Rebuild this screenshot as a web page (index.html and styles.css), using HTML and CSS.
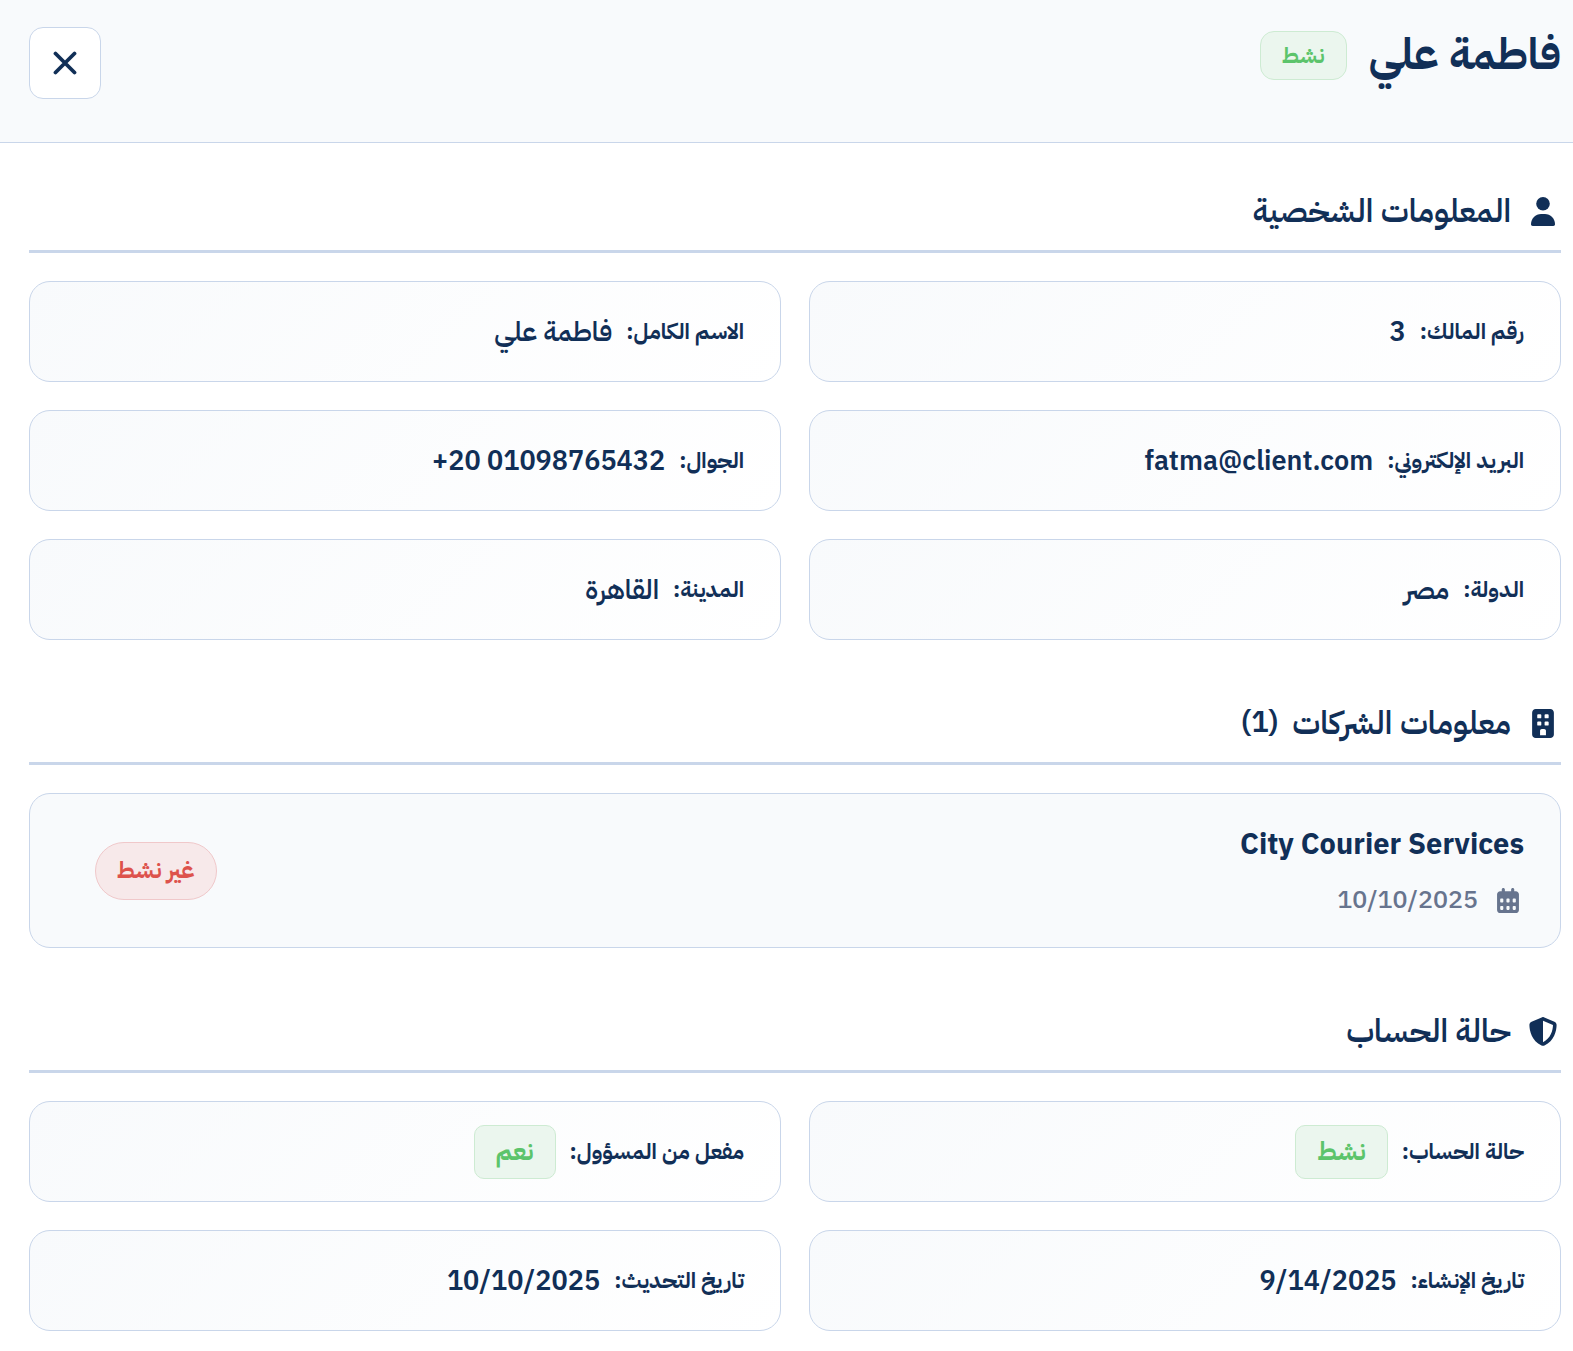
FILE: index.html
```html
<!doctype html>
<html lang="ar" dir="rtl">
    <head>
        <meta charset="utf-8">
        <meta name="viewport" content="width=device-width, initial-scale=1">
        <title>فاطمة علي</title>
        <link rel="stylesheet" href="styles.css">
    </head>
<body>

    <header class="header">
        <div class="header-title">
            <h1>فاطمة علي</h1>
            <span class="badge badge-small">نشط</span>
        </div>
        <button type="button" class="close" aria-label="إغلاق">
            <svg viewBox="0 0 24 24"><path d="M2.5 2.5l19 19M21.5 2.5l-19 19" fill="none" stroke="currentColor" stroke-width="3.8" stroke-linecap="round"/></svg>
        </button>
    </header>

    <main class="content">
        <!-- المعلومات الشخصية -->
        <section>
            <h2 class="section-title">
                <svg class="icon" viewBox="0 0 448 512"><circle cx="224" cy="120" r="120"/><path d="M12 482C12 384 92 302 190 302h68c98 0 178 82 178 180 0 17-13 30-30 30H42c-17 0-30-13-30-30z"/></svg>
                <span>المعلومات الشخصية</span>
            </h2>
            <dl class="grid">
                <div class="item"><dt>رقم المالك:</dt><dd>3</dd></div>
                <div class="item"><dt>الاسم الكامل:</dt><dd>فاطمة علي</dd></div>
                <div class="item"><dt>البريد الإلكتروني:</dt><dd dir="ltr">fatma@client.com</dd></div>
                <div class="item"><dt>الجوال:</dt><dd dir="ltr">+20 01098765432</dd></div>
                <div class="item"><dt>الدولة:</dt><dd>مصر</dd></div>
                <div class="item"><dt>المدينة:</dt><dd>القاهرة</dd></div>
            </dl>
        </section>

        <!-- معلومات الشركات -->
        <section>
            <h2 class="section-title">
                <svg class="icon" viewBox="0 0 384 512"><path fill-rule="evenodd" d="M64 0h256c35 0 64 29 64 64v384c0 35-29 64-64 64H64c-35 0-64-29-64-64V64C0 29 29 0 64 0zM106 92c-9 0-16 7-16 16v40c0 9 7 16 16 16h40c9 0 16-7 16-16v-40c0-9-7-16-16-16zM236 92c-9 0-16 7-16 16v40c0 9 7 16 16 16h40c9 0 16-7 16-16v-40c0-9-7-16-16-16zM106 220c-9 0-16 7-16 16v40c0 9 7 16 16 16h40c9 0 16-7 16-16v-40c0-9-7-16-16-16zM236 220c-9 0-16 7-16 16v40c0 9 7 16 16 16h40c9 0 16-7 16-16v-40c0-9-7-16-16-16zM172 352c-18 0-32 14-32 32v78h104v-78c0-18-14-32-32-32z"/></svg>
                <span>معلومات الشركات</span>
                <span class="count">(1)</span>
            </h2>
            <article class="company">
                <div class="company-info">
                    <h3 dir="ltr">City Courier Services</h3>
                    <p>
                        <svg class="icon" viewBox="0 0 448 512"><path fill-rule="evenodd" d="M128 0c18 0 32 14 32 32v32h128V32c0-18 14-32 32-32s32 14 32 32v32h32c35 0 64 29 64 64v320c0 35-29 64-64 64H64c-35 0-64-29-64-64V128c0-35 29-64 64-64h32V32c0-18 14-32 32-32zM64 232v48c0 9 7 16 16 16h32c9 0 16-7 16-16v-48c0-9-7-16-16-16H80c-9 0-16 7-16 16zM192 232v48c0 9 7 16 16 16h32c9 0 16-7 16-16v-48c0-9-7-16-16-16h-32c-9 0-16 7-16 16zM320 232v48c0 9 7 16 16 16h32c9 0 16-7 16-16v-48c0-9-7-16-16-16h-32c-9 0-16 7-16 16zM64 384v48c0 9 7 16 16 16h32c9 0 16-7 16-16v-48c0-9-7-16-16-16H80c-9 0-16 7-16 16zM192 384v48c0 9 7 16 16 16h32c9 0 16-7 16-16v-48c0-9-7-16-16-16h-32c-9 0-16 7-16 16zM320 384v48c0 9 7 16 16 16h32c9 0 16-7 16-16v-48c0-9-7-16-16-16h-32c-9 0-16 7-16 16z"/></svg>
                        <span>10/10/2025</span>
                    </p>
                </div>
                <span class="badge badge-danger">غير نشط</span>
            </article>
        </section>

        <!-- حالة الحساب -->
        <section>
            <h2 class="section-title">
                <svg class="icon" viewBox="0 0 512 512"><path d="M256 0c4.6 0 9.2 1 13.4 2.9L457.7 82.8c22 9.3 38.4 31 38.3 57.2c-.5 99.2-41.3 280.7-213.6 363.2c-16.7 8-36.1 8-52.8 0C57.3 420.7 16.5 239.2 16 140c-.1-26.2 16.3-47.9 38.3-57.2L242.7 2.9C246.8 1 251.4 0 256 0zm0 66.8V444.8C394 378 431.1 230.1 432 141.4L256 66.8z"/></svg>
                <span>حالة الحساب</span>
            </h2>
            <dl class="grid">
                <div class="item"><dt>حالة الحساب:</dt><dd class="badge">نشط</dd></div>
                <div class="item"><dt>مفعل من المسؤول:</dt><dd class="badge">نعم</dd></div>
                <div class="item"><dt>تاريخ الإنشاء:</dt><dd>9/14/2025</dd></div>
                <div class="item"><dt>تاريخ التحديث:</dt><dd>10/10/2025</dd></div>
            </dl>
        </section>
    </main>

</body>
</html>
```
FILE: styles.css
```css
* {
    margin: 0;
    padding: 0;
    box-sizing: border-box;
}

body {
    background-color: #fff;
    color: #112f57;
    font-family: "IBM Plex Sans Arabic", "Noto Sans", "Noto Sans Arabic", "DejaVu Sans", sans-serif;
    font-weight: 600;
}

.header {
    display: flex;
    justify-content: space-between;
    align-items: flex-start;
    padding: 27px 12px 43px 29px;
    background-color: #f8fafc;
    border-bottom: 1px solid #c9d6ea;
}

.header-title {
    display: flex;
    align-items: center;
    gap: 22px;
}

h1 {
    font-size: 43px;
    line-height: 56px;
    font-weight: 700;
}

.close {
    display: flex;
    align-items: center;
    justify-content: center;
    width: 72px;
    height: 72px;
    border: 1px solid #c9d6ea;
    border-radius: 14px;
    background-color: #fff;
    color: #112f57;
    cursor: pointer;
}

.close svg {
    width: 24px;
    height: 24px;
}

.content {
    display: flex;
    flex-direction: column;
    gap: 44px;
    padding: 29px 12px 20px 29px;
}

.section-title {
    display: flex;
    align-items: center;
    gap: 14px;
    margin-bottom: 28px;
    padding: 14px 0;
    border-bottom: 3px solid #c9d6ea;
    font-size: 32px;
    line-height: 50px;
    font-weight: 600;
}

.count {
    font-size: 29px;
}

.icon {
    width: 36px;
    height: 29px;
    fill: currentColor;
}

.grid {
    display: grid;
    grid-template-columns: 1fr 1fr;
    gap: 28px;
}

.item {
    display: flex;
    align-items: center;
    gap: 14px;
    min-height: 101px;
    padding: 22px 36px;
    border: 1px solid #c9d6ea;
    border-radius: 21px;
    background: linear-gradient(135deg, #f8fafc 0%, #fff 100%);
}

.item dt {
    font-size: 22px;
    line-height: 32px;
    font-weight: 700;
}

.item dd {
    font-size: 27px;
    line-height: 40px;
}

.badge,
.item .badge {
    padding: 5px 21px;
    border: 1px solid #cdebd2;
    border-radius: 10px;
    background-color: #ebf6ee;
    color: #5cc46b;
    font-size: 25px;
    line-height: 42px;
    font-weight: 700;
}

.badge-small {
    padding: 5px 21px;
    border-radius: 14px;
    font-size: 22px;
    line-height: 37px;
}

.company {
    display: flex;
    align-items: center;
    justify-content: space-between;
    padding: 28px 36px 27px 65px;
    border: 1px solid #c9d6ea;
    border-radius: 21px;
    background-color: #f8fafc;
}

.company h3 {
    font-size: 29px;
    line-height: 46px;
    font-weight: 700;
}

.company p {
    display: flex;
    align-items: center;
    gap: 14px;
    margin-top: 12px;
    color: #67748e;
    font-size: 25px;
    line-height: 40px;
    font-weight: 500;
}

.company .icon {
    width: 32px;
    height: 25px;
}

.badge-danger {
    border-color: #f0c8ca;
    border-radius: 29px;
    background-color: #f7e9ea;
    color: #dd524c;
    font-size: 23px;
    line-height: 46px;
}
```
